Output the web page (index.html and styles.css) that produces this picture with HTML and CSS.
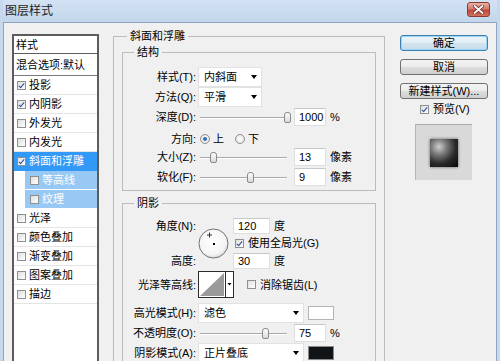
FILE: index.html
```html
<!DOCTYPE html>
<html lang="zh-CN">
<head>
    <meta charset="UTF-8">
    <title>图层样式</title>
    <link rel="stylesheet" href="styles.css">
</head>
<body>
<div class="window">
    <div class="titlebar">
        <span class="title">图层样式</span>
        <span class="close-btn">
            <svg width="11" height="9" viewBox="0 0 11 9"><path d="M1.5 1 L9.5 8 M9.5 1 L1.5 8" stroke="#5a2a25" stroke-width="3.4" stroke-linecap="round"/><path d="M1.5 1 L9.5 8 M9.5 1 L1.5 8" stroke="#fff" stroke-width="1.8" stroke-linecap="round"/></svg>
        </span>
    </div>

    <div class="dialog">
        <!-- style list on the left -->
        <div class="style-list">
            <div class="list-head">样式</div>
            <div class="list-blend">混合选项:默认</div>
            <div class="list-row"><span class="cb on"></span>投影</div>
            <div class="list-row"><span class="cb on"></span>内阴影</div>
            <div class="list-row"><span class="cb"></span>外发光</div>
            <div class="list-row"><span class="cb"></span>内发光</div>
            <div class="list-row selected"><span class="cb on"></span>斜面和浮雕</div>
            <div class="list-row sub"><span class="cb"></span>等高线</div>
            <div class="list-row sub"><span class="cb"></span>纹理</div>
            <div class="list-row"><span class="cb"></span>光泽</div>
            <div class="list-row"><span class="cb"></span>颜色叠加</div>
            <div class="list-row"><span class="cb"></span>渐变叠加</div>
            <div class="list-row"><span class="cb"></span>图案叠加</div>
            <div class="list-row"><span class="cb"></span>描边</div>
        </div>

        <fieldset class="group outer">
            <legend>斜面和浮雕</legend>

            <fieldset class="group inner">
                <legend>结构</legend>
                <div class="row">
                    <span class="lbl">样式(T):</span>
                    <div class="select w1"><span>内斜面</span><span class="arrow"></span></div>
                </div>
                <div class="row">
                    <span class="lbl">方法(Q):</span>
                    <div class="select w1"><span>平滑</span><span class="arrow"></span></div>
                </div>
                <div class="row">
                    <span class="lbl">深度(D):</span>
                    <div class="slider"><span class="thumb" style="left: 86px"></span></div>
                    <span class="num">1000</span><span class="unit">%</span>
                </div>
                <div class="row dir-row">
                    <span class="lbl">方向:</span>
                    <span class="radio on"></span><span class="radio-text">上</span>
                    <span class="radio gap"></span><span class="radio-text">下</span>
                </div>
                <div class="row">
                    <span class="lbl">大小(Z):</span>
                    <div class="slider"><span class="thumb" style="left: 12px"></span></div>
                    <span class="num">13</span><span class="unit">像素</span>
                </div>
                <div class="row">
                    <span class="lbl">软化(F):</span>
                    <div class="slider"><span class="thumb" style="left: 49px"></span></div>
                    <span class="num">9</span><span class="unit">像素</span>
                </div>
            </fieldset>

            <fieldset class="group inner shadow">
                <legend>阴影</legend>
                <div class="angle-block">
                    <span class="lbl angle-lbl">角度(N):</span>
                    <svg class="dial" width="31" height="31" viewBox="0 0 31 31">
                        <defs>
                            <radialGradient id="dialFill" cx="45%" cy="40%" r="60%">
                                <stop offset="0" stop-color="#ffffff"/>
                                <stop offset="0.8" stop-color="#f4f4f4"/>
                                <stop offset="1" stop-color="#dcdcdc"/>
                            </radialGradient>
                        </defs>
                        <circle cx="15.5" cy="15.5" r="14.5" fill="url(#dialFill)" stroke="#6f7378"/>
                        <rect x="15" y="15" width="2" height="2" fill="#000"/>
                        <path d="M11.5 4.5 V9.5 M9 7 H14" stroke="#333" stroke-width="1"/>
                    </svg>
                    <div class="angle-val"><span class="num w2">120</span><span class="unit">度</span></div>
                    <label class="check global"><span class="cb on"></span>使用全局光(G)</label>
                    <span class="lbl height-lbl">高度:</span>
                    <div class="height-val"><span class="num w2">30</span><span class="unit">度</span></div>
                </div>

                <div class="row contour-row">
                    <span class="lbl">光泽等高线:</span>
                    <svg class="contour" width="36" height="27" viewBox="0 0 36 27">
                        <rect x="0.5" y="0.5" width="35" height="26" fill="#fff" stroke="#2b2b2b"/>
                        <polygon points="2,25 26,2 26,25" fill="#9a9a9a"/>
                        <path d="M27.5 1 V26" stroke="#2b2b2b"/>
                        <polygon points="29.5,12 33.5,12 31.5,14.5" fill="#000"/>
                    </svg>
                    <label class="check anti"><span class="cb"></span>消除锯齿(L)</label>
                </div>

                <div class="row mode-row">
                    <span class="lbl">高光模式(H):</span>
                    <div class="select w2"><span>滤色</span><span class="arrow"></span></div>
                    <span class="swatch"></span>
                </div>
                <div class="row">
                    <span class="lbl">不透明度(O):</span>
                    <div class="slider"><span class="thumb" style="left: 64px"></span></div>
                    <span class="num">75</span><span class="unit">%</span>
                </div>
                <div class="row">
                    <span class="lbl">阴影模式(A):</span>
                    <div class="select w2"><span>正片叠底</span><span class="arrow"></span></div>
                    <span class="swatch dark"></span>
                </div>
            </fieldset>
        </fieldset>

        <div class="actions">
            <div class="btn default">确定</div>
            <div class="btn">取消</div>
            <div class="btn last">新建样式(W)...</div>
            <label class="check preview-check"><span class="cb on"></span>预览(V)</label>
            <div class="preview-box"><div class="preview-swatch"></div></div>
        </div>
    </div>
</div>
</body>
</html>
```

FILE: styles.css
```css
body {
    margin: 0;
    font: 11px/16px "Liberation Sans", "Noto Sans CJK SC", sans-serif;
    color: #000;
    background: #f0f0f0;
    overflow: hidden;
}
.window {
    width: 500px;
    height: 361px;
    box-sizing: border-box;
    padding: 0 3px;
    background: #c5d8ed;
    display: flex;
    flex-direction: column;
    overflow: hidden;
}
.titlebar {
    height: 22px;
    flex: none;
    display: flex;
    align-items: flex-start;
    justify-content: space-between;
    background: linear-gradient(#d3e2f3, #c2d6ec);
}
.title {
    font-size: 12px;
    line-height: 22px;
    padding-left: 2px;
    color: #1e1e1e;
}
.close-btn {
    width: 23px;
    height: 15px;
    margin: 2px 7px 0 0;
    box-sizing: border-box;
    border: 1px solid #8c3b31;
    border-radius: 3px;
    background: linear-gradient(#eab2a6, #d4796a 45%, #c4473a 55%, #d0705f);
    display: flex;
    align-items: center;
    justify-content: center;
}
.dialog {
    flex: 1;
    display: flex;
    align-items: flex-start;
    background: #f0f0f0;
    border: 1px solid #8fa4bd;
    border-bottom: none;
    padding: 5px 0 0 8px;
    overflow: hidden;
}

/* style list */
.style-list {
    width: 87px;
    height: 340px;
    flex: none;
    box-sizing: border-box;
    margin-top: 6px;
    border: 2px solid #5c5c5c;
    border-bottom: none;
    background: #fff;
}
.list-head {
    height: 17px;
    line-height: 19px;
    padding-left: 2px;
    border-bottom: 1px solid #5c5c5c;
}
.list-blend {
    height: 21px;
    line-height: 22px;
    padding-left: 2px;
    border-bottom: 1px solid #7a7a7a;
    white-space: nowrap;
}
.list-row {
    height: 18px;
    display: flex;
    align-items: center;
    gap: 3px;
    padding-left: 3px;
    border-bottom: 1px solid #e4e4e4;
    white-space: nowrap;
}
.list-row.selected {
    background: #3399f7;
    color: #fff;
    border-bottom-color: #3399f7;
}
.list-row.sub {
    margin-left: 11px;
    padding-left: 5px;
    background: #98c9f5;
    color: #fff;
    border-bottom-color: #fff;
}

.cb {
    position: relative;
    width: 9px;
    height: 9px;
    flex: none;
    box-sizing: border-box;
    border: 1px solid #8e8f8f;
    background: linear-gradient(135deg, #dedede, #fff);
}
.cb.on::after {
    content: "";
    position: absolute;
    left: 2px;
    top: 0;
    width: 2px;
    height: 5px;
    border: solid #2a4a98;
    border-width: 0 1.5px 1.5px 0;
    transform: rotate(40deg);
}

/* group boxes */
.group {
    margin: 0;
    min-width: 0;
    border: 1px solid #bcbcbc;
}
.group > legend {
    padding: 0 3px;
    margin-left: 5px;
    line-height: 16px;
}
.outer {
    width: 272px;
    flex: none;
    box-sizing: border-box;
    margin-left: 14px;
    padding: 0 8px 40px;
}
.inner {
    padding: 7px 6px 3px;
}
.shadow {
    margin-top: 4px;
    padding-top: 6px;
}

.row {
    height: 20px;
    display: flex;
    align-items: center;
    white-space: nowrap;
}
.lbl {
    width: 67px;
    flex: none;
    margin-right: 2px;
    text-align: right;
    white-space: nowrap;
}
.select {
    height: 20px;
    box-sizing: border-box;
    flex: none;
    display: flex;
    align-items: center;
    justify-content: space-between;
    padding: 0 4px 0 5px;
    background: #fff;
    border: 1px solid #e2e2e2;
}
.select.w1 {
    width: 64px;
}
.select.w2 {
    width: 106px;
}
.arrow {
    width: 0;
    height: 0;
    border-left: 3.5px solid transparent;
    border-right: 3.5px solid transparent;
    border-top: 4px solid #000;
}
.slider {
    position: relative;
    width: 89px;
    height: 20px;
    flex: none;
    margin-right: 7px;
}
.slider::before {
    content: "";
    position: absolute;
    left: 2px;
    right: 0;
    top: 10px;
    height: 1px;
    background: #a9a9a9;
    box-shadow: 0 1px 0 #fff;
}
.thumb {
    position: absolute;
    top: 5px;
    width: 7px;
    height: 11px;
    box-sizing: border-box;
    border: 1px solid #8a8a8a;
    border-radius: 3px 3px 2px 2px;
    background: linear-gradient(#fdfdfd, #d9d9d9);
}
.num {
    width: 32px;
    height: 18px;
    flex: none;
    box-sizing: border-box;
    padding-left: 4px;
    line-height: 17px;
    background: #fff;
    border: 1px solid #dedede;
    border-top-color: #c8c8c8;
}
.num.w2 {
    width: 37px;
    height: 16px;
    line-height: 15px;
}
.unit {
    margin-left: 4px;
}
.dir-row {
    padding-top: 3px;
    box-sizing: border-box;
}
.radio {
    position: relative;
    width: 10px;
    height: 10px;
    flex: none;
    margin-left: 2px;
    box-sizing: border-box;
    border: 1px solid #8e8f8f;
    border-radius: 50%;
    background: radial-gradient(#fff, #dcdcdc);
}
.radio.on::after {
    content: "";
    position: absolute;
    left: 2px;
    top: 2px;
    width: 4px;
    height: 4px;
    border-radius: 50%;
    background: #2d6db4;
}
.radio.gap {
    margin-left: 11px;
}
.radio-text {
    margin-left: 3px;
}

/* angle / altitude */
.angle-block {
    display: grid;
    grid-template-columns: 69px 35px 1fr;
    grid-template-rows: 17px 18px 17px;
    align-items: center;
}
.angle-lbl {
    grid-column: 1;
    grid-row: 1;
}
.height-lbl {
    grid-column: 1;
    grid-row: 3;
}
.dial {
    grid-column: 2;
    grid-row: 1 / 4;
    align-self: center;
}
.angle-val, .height-val {
    grid-column: 3;
    display: flex;
    align-items: center;
}
.angle-val {
    grid-row: 1;
}
.height-val {
    grid-row: 3;
}
.check {
    display: flex;
    align-items: center;
    gap: 4px;
    white-space: nowrap;
}
.global {
    grid-column: 3;
    grid-row: 2;
    margin-left: 2px;
}
.contour-row {
    height: 27px;
    margin-top: 2px;
}
.contour {
    flex: none;
}
.anti {
    margin-left: 13px;
}
.mode-row {
    margin-top: 5px;
}
.swatch {
    width: 26px;
    height: 14px;
    flex: none;
    margin-left: 4px;
    box-sizing: border-box;
    border: 1px solid #b4b4b4;
    background: #fff;
}
.swatch.dark {
    background: #111417;
    border-color: #8a8a8a;
}

/* buttons and preview */
.actions {
    width: 88px;
    flex: none;
    margin: 7px 0 0 15px;
    display: flex;
    flex-direction: column;
}
.btn {
    height: 16px;
    box-sizing: border-box;
    margin-bottom: 8px;
    border: 1px solid #707070;
    border-radius: 3px;
    background: linear-gradient(#f4f4f4, #ebebeb 50%, #dddddd 50%, #cfcfcf);
    text-align: center;
    line-height: 14px;
    white-space: nowrap;
}
.btn.default {
    border-color: #3c7fb1;
    box-shadow: inset 0 0 0 1px #9ad6f7;
    background: linear-gradient(#eef5fa, #e1ecf4 50%, #d2e3ef 50%, #c7dbe9);
}
.btn.last {
    margin-bottom: 2px;
}
.preview-check {
    height: 16px;
    padding-left: 20px;
}
.preview-box {
    width: 57px;
    height: 56px;
    margin: 7px 0 0 15px;
    box-sizing: border-box;
    border-top: 1px solid #ababab;
    border-left: 1px solid #b5b5b5;
    background: #d9d9d9;
    display: flex;
    align-items: center;
    justify-content: center;
}
.preview-swatch {
    width: 28px;
    height: 28px;
    background: radial-gradient(circle at 32% 28%, #cfcfcf 0, #7a7a7a 28%, #2a2a2a 60%, #060606 100%);
    box-shadow: 0 0 3px rgba(0, 0, 0, 0.55);
}
```
